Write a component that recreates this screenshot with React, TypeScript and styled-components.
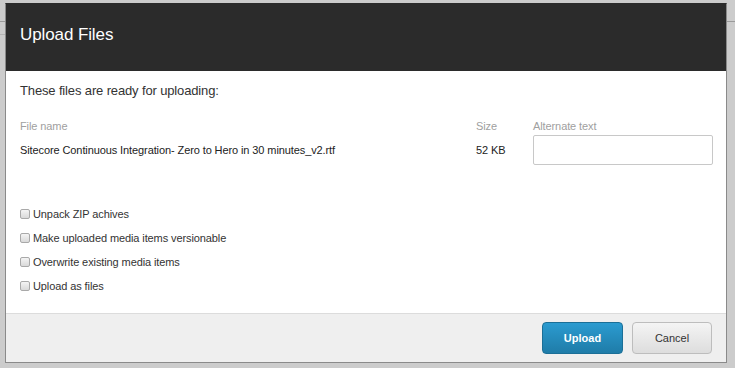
import styled, { createGlobalStyle } from "styled-components";

const GlobalStyle = createGlobalStyle`
  html, body {
    margin: 0;
    padding: 0;
    background: #cccccc;
    font-family: "Liberation Sans", Arial, sans-serif;
  }
`;

const Page = styled.div`
  position: relative;
  width: 735px;
  height: 368px;
  overflow: hidden;
  background: #cccccc;
`;

const PageBar = styled.div`
  height: 21px;
  border-bottom: 1px solid #9a9a9a;
`;

const PageSubBar = styled.div`
  width: 12px;
  height: 12px;
  border-bottom: 1px solid #b4b4b4;
`;

const Dialog = styled.div`
  position: absolute;
  left: 5px;
  top: 3px;
  width: 720px;
  height: 358px;
  border: 1px solid #8a8a8a;
  border-top-color: #2b2b2b;
  display: flex;
  flex-direction: column;
  background: #ffffff;
`;

const Header = styled.div`
  height: 67px;
  background: #2b2b2b;
  display: flex;
  align-items: center;
  padding: 0 14px;
  box-sizing: border-box;
  flex-shrink: 0;
`;

const Title = styled.h1`
  margin: 0 0 6px;
  color: #ffffff;
  font-size: 17px;
  font-weight: normal;
  letter-spacing: -0.1px;
`;

const Body = styled.div`
  flex: 1;
  padding: 12px 13px 0 14px;
`;

const Intro = styled.p`
  margin: 0;
  font-size: 13px;
  line-height: 15px;
  letter-spacing: -0.14px;
  color: #333333;
`;

const FileTable = styled.div`
  display: grid;
  grid-template-columns: 1fr 57px 180px;
  grid-template-rows: 13px 30px;
  row-gap: 2px;
  align-items: center;
  margin-top: 22px;
  font-size: 11px;
  line-height: 13px;
  letter-spacing: -0.1px;
`;

const ColumnHead = styled.div`
  color: #a0a0a0;
`;

const Cell = styled.div`
  color: #222222;
`;

const AltInput = styled.input`
  box-sizing: border-box;
  width: 180px;
  height: 30px;
  border: 1px solid #c8c8c8;
  border-radius: 2px;
  padding: 0 6px;
  font-family: inherit;
  font-size: 11px;
  outline: none;
`;

const Options = styled.div`
  display: flex;
  flex-direction: column;
  margin-top: 37px;
`;

const OptionRow = styled.label`
  display: flex;
  align-items: center;
  gap: 3px;
  height: 24px;
  font-size: 11px;
  letter-spacing: -0.1px;
  color: #333333;
`;

const Box = styled.span`
  width: 8px;
  height: 8px;
  border: 1px solid #a9a9a9;
  border-radius: 2px;
  background: linear-gradient(#f4f4f4, #d9d9d9);
  flex-shrink: 0;
`;

const Footer = styled.div`
  height: 49px;
  border-top: 1px solid #dcdcdc;
  background: #efefef;
  display: flex;
  justify-content: flex-end;
  align-items: flex-start;
  gap: 9px;
  padding: 8px 14px 0 0;
  box-sizing: border-box;
  flex-shrink: 0;
`;

const Button = styled.button<{ primary?: boolean }>`
  width: ${({ primary }) => (primary ? "81px" : "80px")};
  height: 32px;
  border-radius: 4px;
  font-family: inherit;
  font-size: 11px;
  font-weight: ${({ primary }) => (primary ? "bold" : "normal")};
  color: ${({ primary }) => (primary ? "#ffffff" : "#333333")};
  border: 1px solid ${({ primary }) => (primary ? "#1b6f97" : "#bdbdbd")};
  background: ${({ primary }) =>
    primary
      ? "linear-gradient(#2b9bd0, #1f7ca8)"
      : "linear-gradient(#f4f4f4, #dddddd)"};
  cursor: pointer;
`;

const options = [
  "Unpack ZIP achives",
  "Make uploaded media items versionable",
  "Overwrite existing media items",
  "Upload as files",
];

export default function App() {
  return (
    <>
      <GlobalStyle />
      <Page>
        <PageBar />
        <PageSubBar />
        <Dialog>
          <Header>
            <Title>Upload Files</Title>
          </Header>
          <Body>
            <Intro>These files are ready for uploading:</Intro>
            <FileTable>
              <ColumnHead>File name</ColumnHead>
              <ColumnHead>Size</ColumnHead>
              <ColumnHead>Alternate text</ColumnHead>
              <Cell>Sitecore Continuous Integration- Zero to Hero in 30 minutes_v2.rtf</Cell>
              <Cell>52 KB</Cell>
              <AltInput />
            </FileTable>
            <Options>
              {options.map((o) => (
                <OptionRow key={o}>
                  <Box />
                  {o}
                </OptionRow>
              ))}
            </Options>
          </Body>
          <Footer>
            <Button primary>Upload</Button>
            <Button>Cancel</Button>
          </Footer>
        </Dialog>
      </Page>
    </>
  );
}
